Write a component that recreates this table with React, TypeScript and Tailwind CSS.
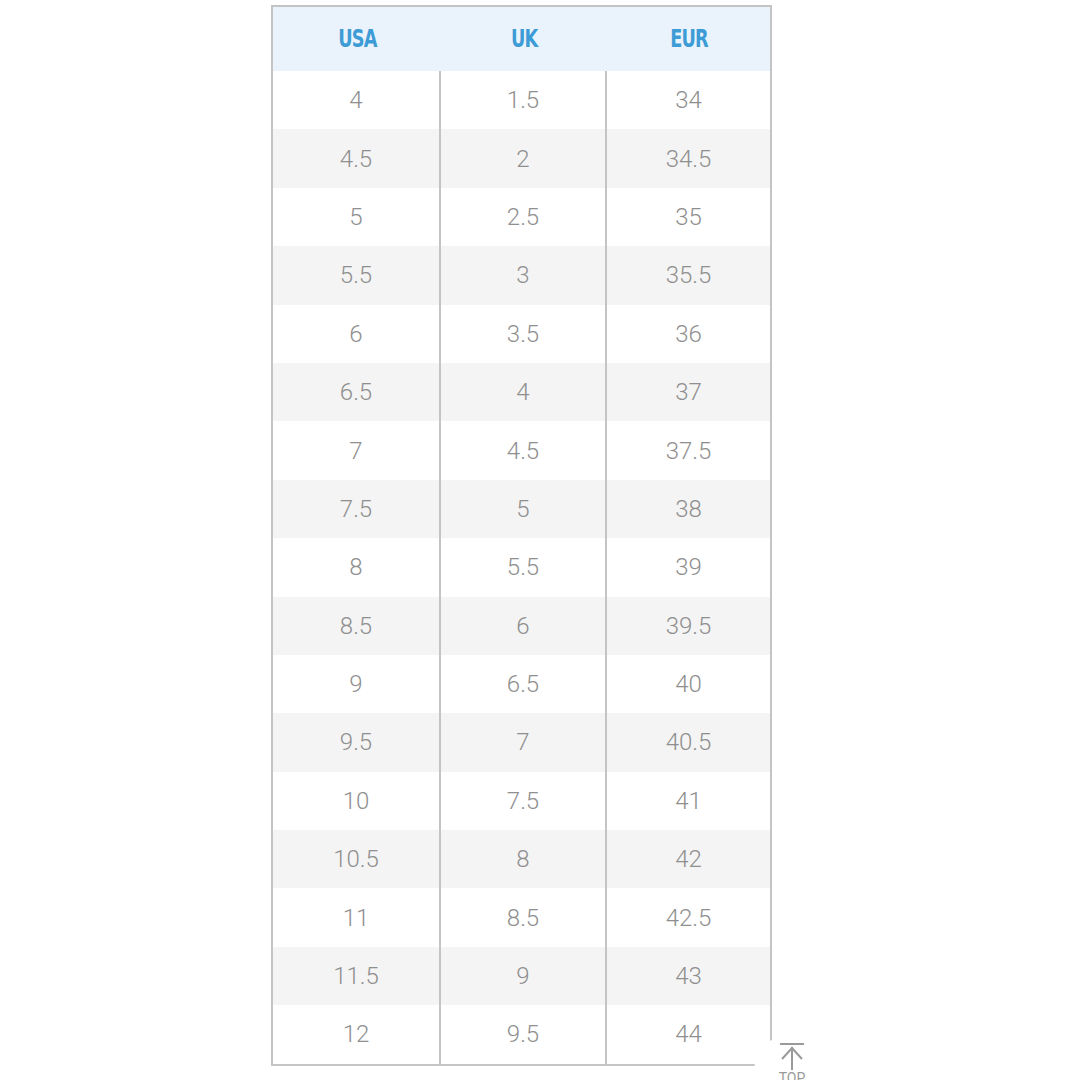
import React from "react";

const rows: [string, string, string][] = [
  ["4", "1.5", "34"],
  ["4.5", "2", "34.5"],
  ["5", "2.5", "35"],
  ["5.5", "3", "35.5"],
  ["6", "3.5", "36"],
  ["6.5", "4", "37"],
  ["7", "4.5", "37.5"],
  ["7.5", "5", "38"],
  ["8", "5.5", "39"],
  ["8.5", "6", "39.5"],
  ["9", "6.5", "40"],
  ["9.5", "7", "40.5"],
  ["10", "7.5", "41"],
  ["10.5", "8", "42"],
  ["11", "8.5", "42.5"],
  ["11.5", "9", "43"],
  ["12", "9.5", "44"],
];

export default function App() {
  return (
    <div className="relative w-[1080px] h-[1080px] overflow-hidden bg-white">
      <div className="ml-[271px] mt-[5px] w-[501px] border-2 border-[#c4c4c4]">
        <div className="grid grid-cols-[168px_166px_163px] h-[64px] bg-[#eaf3fb] items-center text-center text-[#3d9bd6] font-bold text-[24px] tracking-[-1px]" style={{ fontFamily: '"DejaVu Sans Condensed", "DejaVu Sans", sans-serif' }}>
          <div><span className="inline-block scale-x-[0.82]">USA</span></div>
          <div><span className="inline-block scale-x-[0.82]">UK</span></div>
          <div><span className="inline-block scale-x-[0.82]">EUR</span></div>
        </div>
        {rows.map((r, i) => (
          <div
            key={i}
            className={`grid grid-cols-[168px_166px_163px] h-[58.4px] items-center text-center text-[#8f8f8f] text-[24px] font-light ${i % 2 === 1 ? "bg-[#f4f4f4]" : "bg-white"}`}
            style={{ fontFamily: 'Roboto, "Noto Sans", sans-serif' }}
          >
            <div className="h-full flex items-center justify-center border-r-2 border-[#c4c4c4]">{r[0]}</div>
            <div className="h-full flex items-center justify-center border-r-2 border-[#c4c4c4]">{r[1]}</div>
            <div className="h-full flex items-center justify-center">{r[2]}</div>
          </div>
        ))}
      </div>
      <div className="absolute left-[754px] top-[1034px] w-[76px] h-[76px] rounded-full bg-white flex flex-col items-center pt-[8px]">
        <svg width="26" height="28" viewBox="0 0 26 28" fill="none" stroke="#9a9a9a" strokeWidth="2">
          <line x1="1" y1="2" x2="25" y2="2" />
          <line x1="13" y1="5" x2="13" y2="28" />
          <path d="M3 17 L13 6 L23 17" />
        </svg>
        <div className="text-[#9a9a9a] text-[14px] leading-none mt-[1px]" style={{ fontFamily: 'Roboto, sans-serif' }}>TOP</div>
      </div>
    </div>
  );
}
